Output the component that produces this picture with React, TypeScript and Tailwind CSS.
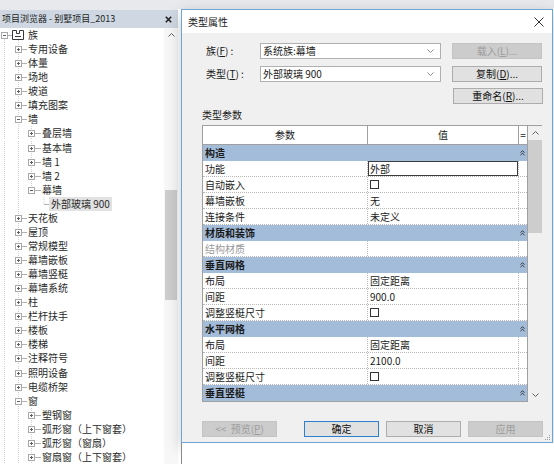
import React from 'react';

type Row = { l: number; t: string; e?: '+' | '-'; sel?: boolean };

const tree: Row[] = [
  { l: 0, t: '族', e: '-' },
  { l: 1, t: '专用设备', e: '+' },
  { l: 1, t: '体量', e: '+' },
  { l: 1, t: '场地', e: '+' },
  { l: 1, t: '坡道', e: '+' },
  { l: 1, t: '填充图案', e: '+' },
  { l: 1, t: '墙', e: '-' },
  { l: 2, t: '叠层墙', e: '+' },
  { l: 2, t: '基本墙', e: '+' },
  { l: 2, t: '墙 1', e: '+' },
  { l: 2, t: '墙 2', e: '+' },
  { l: 2, t: '幕墙', e: '-' },
  { l: 3, t: '外部玻璃 900', sel: true },
  { l: 1, t: '天花板', e: '+' },
  { l: 1, t: '屋顶', e: '+' },
  { l: 1, t: '常规模型', e: '+' },
  { l: 1, t: '幕墙嵌板', e: '+' },
  { l: 1, t: '幕墙竖梃', e: '+' },
  { l: 1, t: '幕墙系统', e: '+' },
  { l: 1, t: '柱', e: '+' },
  { l: 1, t: '栏杆扶手', e: '+' },
  { l: 1, t: '楼板', e: '+' },
  { l: 1, t: '楼梯', e: '+' },
  { l: 1, t: '注释符号', e: '+' },
  { l: 1, t: '照明设备', e: '+' },
  { l: 1, t: '电缆桥架', e: '+' },
  { l: 1, t: '窗', e: '-' },
  { l: 2, t: '塑钢窗', e: '+' },
  { l: 2, t: '弧形窗（上下窗套）', e: '+' },
  { l: 2, t: '弧形窗（窗扇）', e: '+' },
  { l: 2, t: '窗扇窗（上下窗套）', e: '+' },
];

const CX = [4.5, 18.5, 31.5, 44];
const TS = [28, 28, 42, 49];

function TreeRow({ r, i }: { r: Row; i: number }) {
  const v: [number, number, number][] = [];
  v.push([4.5, i === 0 ? 10.5 : 0, 14]);
  v.push([18.5, i === 0 ? 12 : 0, 14]);
  if ((i >= 7 && i <= 10) || i >= 27) v.push([31.5, 0, 14]);
  if (i === 11) v.push([31.5, 0, 7]);
  if (i === 12) v.push([44, 0, 7]);
  const cx = CX[r.l];
  const w = TS[r.l];
  const hEnd = r.l === 0 ? 12 : r.l === 3 ? 49 : w - 1;
  return (
    <div className="flex items-center h-[14.07px] shrink-0">
      <svg width={w} height="14" viewBox={`0 0 ${w} 14`} className="shrink-0">
        {v.map(([x, y1, y2], k) => (
          <line key={k} x1={x} x2={x} y1={y1} y2={y2} stroke="#cfcfcf" strokeDasharray="1 1" />
        ))}
        <line x1={cx} x2={hEnd} y1={7.5} y2={7.5} stroke="#b0b0b0" />
        {r.e && (
          <g>
            <rect x={cx - 3} y={4.5} width={6} height={6} fill="white" stroke="#a8a8a8" />
            <line x1={cx - 1.5} x2={cx + 1.5} y1={7.5} y2={7.5} stroke="#606060" />
            {r.e === '+' && <line x1={cx} x2={cx} y1={6} y2={9} stroke="#606060" />}
          </g>
        )}
        {r.l === 0 && (
          <g fill="none" stroke="#3a3a3a" strokeWidth="1">
            <path d="M12.5 2.5 H16.5 V5.5 H19.5 V2.5 H23.5 V11.5 H12.5 Z" />
            <path d="M15 8.5 H21" />
          </g>
        )}
      </svg>
      <span
        className={`whitespace-nowrap leading-[14px] text-[10px] text-[#2a2a2a] ${r.sel ? 'bg-[#e2e2e2] px-[2px]' : ''}`}
      >
        {r.t}
      </span>
    </div>
  );
}

function ChevUp({ c = '#606060' }: { c?: string }) {
  return (
    <svg width="7" height="4" viewBox="0 0 7 4">
      <path d="M0.5 3.5 L3.5 0.5 L6.5 3.5" stroke={c} fill="none" />
    </svg>
  );
}
function ChevDown({ c = '#606060' }: { c?: string }) {
  return (
    <svg width="7" height="4" viewBox="0 0 7 4">
      <path d="M0.5 0.5 L3.5 3.5 L6.5 0.5" stroke={c} fill="none" />
    </svg>
  );
}
function DblUp() {
  return (
    <svg width="5" height="6" viewBox="0 0 5 6">
      <path d="M0.5 2.5 L2.5 0.8 L4.5 2.5 M0.5 5 L2.5 3.3 L4.5 5" stroke="#2a2a2a" fill="none" strokeWidth="0.9" />
    </svg>
  );
}

function LeftPanel() {
  return (
    <div className="w-[181px] shrink-0 flex flex-col bg-white pr-[3px]">
      <div className="h-[1px] bg-[#e7e9ec]" />
      <div className="h-[18px] bg-[#cfd8e2] flex items-center pl-[2px] pr-[4px]">
        <span className="flex-1 text-[9px] leading-[18px] whitespace-nowrap text-[#1e1e1e]">
          项目浏览器 - 别墅项目_2013
        </span>
        <svg width="7" height="7" viewBox="0 0 7 7" className="mr-[2px]">
          <path d="M0.8 0.8 L6.2 6.2 M6.2 0.8 L0.8 6.2" stroke="#222" strokeWidth="1.6" />
        </svg>
      </div>
      <div className="flex flex-1 min-h-0">
        <div className="flex-1 flex flex-col overflow-hidden">
          {tree.map((r, i) => (
            <TreeRow key={i} r={r} i={i} />
          ))}
        </div>
        <div className="w-[14px] flex flex-col bg-[#f7f7f7]">
          <div className="h-[14px] flex items-center justify-center">
            <ChevUp />
          </div>
          <div className="h-[148px]" />
          <div className="h-[110px] bg-[#cdcdcd] mx-[1px]" />
          <div className="flex-1" />
        </div>
      </div>
    </div>
  );
}

function Select({ children }: { children: React.ReactNode }) {
  return (
    <div className="w-[181px] h-[16px] bg-white border border-[#b0b0b0] flex items-center pl-[2px] pr-[6px] shrink-0">
      <span className="flex-1 leading-[14px] whitespace-nowrap">{children}</span>
      <ChevDown c="#8a8a8a" />
    </div>
  );
}

function Btn({ children, w, kind }: { children: React.ReactNode; w: string; kind?: 'disabled' | 'primary' }) {
  const cls =
    kind === 'disabled'
      ? 'bg-[#cccccc] border-[#c4c4c4] text-[#9c9c9c]'
      : kind === 'primary'
      ? 'bg-[#e1e1e1] border-[#2f7fd1] text-[#111]'
      : 'bg-[#e1e1e1] border-[#adadad] text-[#111]';
  return (
    <div className={`h-[16px] border flex items-center justify-center leading-[14px] whitespace-nowrap shrink-0 ${w} ${cls}`}>
      {children}
    </div>
  );
}

type TRow =
  | { g: string }
  | { p: string; v?: string; cb?: boolean; dim?: boolean; active?: boolean };

const rows: TRow[] = [
  { g: '构造' },
  { p: '功能', v: '外部', active: true },
  { p: '自动嵌入', cb: true },
  { p: '幕墙嵌板', v: '无' },
  { p: '连接条件', v: '未定义' },
  { g: '材质和装饰' },
  { p: '结构材质', v: '', dim: true },
  { g: '垂直网格' },
  { p: '布局', v: '固定距离' },
  { p: '间距', v: '900.0' },
  { p: '调整竖梃尺寸', cb: true },
  { g: '水平网格' },
  { p: '布局', v: '固定距离' },
  { p: '间距', v: '2100.0' },
  { p: '调整竖梃尺寸', cb: true },
  { g: '垂直竖梃' },
];

function Checkbox() {
  return <div className="w-[9px] h-[9px] border border-[#333] bg-white" />;
}

function Table() {
  return (
    <div className="flex h-[277px] w-[340px] border-t border-[#a0a0a0] shrink-0">
      <div className="w-[326px] border-l border-r border-b border-[#a0a0a0] bg-white flex flex-col overflow-hidden">
        <div className="h-[19px] shrink-0 flex border-b border-[#a0a0a0]">
          <div className="w-[165px] border-r border-[#a0a0a0] flex items-center justify-center leading-[18px]">参数</div>
          <div className="w-[151px] border-r border-[#a0a0a0] flex items-center justify-center leading-[18px]">值</div>
          <div className="flex-1 flex items-center justify-center leading-[18px]">=</div>
        </div>
        {rows.map((r, i) =>
          'g' in r ? (
            <div key={i} className="h-[16px] shrink-0 flex items-center bg-[#a3bcd9]">
              <span className="flex-1 pl-[2px] font-bold leading-[16px] text-[#1a1a1a]">{r.g}</span>
              <div className="w-[8px] flex justify-center mr-[1px]">
                <DblUp />
              </div>
            </div>
          ) : (
            <div key={i} className="h-[16px] shrink-0 flex border-b border-dotted border-[#b8b8b8]">
              <div
                className={`w-[165px] border-r border-dotted border-[#b8b8b8] pl-[2px] leading-[15px] ${
                  r.dim ? 'text-[#9a9a9a]' : ''
                }`}
              >
                {r.p}
              </div>
              <div
                className={`w-[151px] border-r border-dotted border-[#b8b8b8] pl-[2px] leading-[15px] flex items-center ${
                  r.active ? 'shadow-[inset_0_0_0_1px_#3c3c3c]' : ''
                }`}
              >
                {r.cb ? <Checkbox /> : r.v}
              </div>
              <div className="flex-1" />
            </div>
          )
        )}
      </div>
      <div className="w-[14px] flex flex-col bg-[#f0f0f0]">
        <div className="h-[14px] flex items-center justify-center shrink-0">
          <ChevUp />
        </div>
        <div className="h-[93px] bg-[#cdcdcd] shrink-0" />
        <div className="flex-1" />
        <div className="h-[14px] flex items-center justify-center shrink-0">
          <ChevDown />
        </div>
      </div>
    </div>
  );
}

function Dialog() {
  return (
    <div className="w-[372px] h-[434px] border border-[#6fa4d6] flex flex-col shadow-[0_5px_14px_rgba(0,0,0,0.22)] shrink-0">
      <div className="h-[23px] bg-white flex items-center pl-[6px] pr-[8px] shrink-0">
        <span className="flex-1 leading-[23px]">类型属性</span>
        <svg width="10" height="10" viewBox="0 0 10 10">
          <path d="M0.5 0.5 L9.5 9.5 M9.5 0.5 L0.5 9.5" stroke="#333" strokeWidth="1" />
        </svg>
      </div>
      <div className="flex-1 bg-[#f0f0f0] flex flex-col pt-[10px] pl-[20px] pr-[9px] pb-[5px] relative">
        <div className="flex items-center h-[16px]">
          <div className="w-[58px] pl-[4px] leading-[16px] whitespace-nowrap">
            族(<span className="underline">F</span>) :
          </div>
          <Select>系统族:幕墙</Select>
          <div className="ml-[11px]">
            <Btn w="w-[90px]" kind="disabled">
              载入(<span className="underline">L</span>)...
            </Btn>
          </div>
        </div>
        <div className="flex items-center h-[16px] mt-[7px]">
          <div className="w-[58px] pl-[4px] leading-[16px] whitespace-nowrap">
            类型(<span className="underline">T</span>) :
          </div>
          <Select>外部玻璃 900</Select>
          <div className="ml-[11px]">
            <Btn w="w-[90px]">
              复制(<span className="underline">D</span>)...
            </Btn>
          </div>
        </div>
        <div className="flex justify-end h-[16px] mt-[6px]">
          <Btn w="w-[90px]">
            重命名(<span className="underline">R</span>)...
          </Btn>
        </div>
        <div className="mt-[5px] h-[12px] leading-[12px] text-[#222]">类型参数</div>
        <div className="mt-[4px]">
          <Table />
        </div>
        <div className="mt-[19px] flex h-[16px]">
          <Btn w="w-[75px]" kind="disabled">
            &lt;&lt;&nbsp; 预览(<span className="underline">P</span>)
          </Btn>
          <div className="ml-auto flex gap-[7px]">
            <Btn w="w-[75px]" kind="primary">确定</Btn>
            <Btn w="w-[75px]">取消</Btn>
            <Btn w="w-[75px]" kind="disabled">应用</Btn>
          </div>
        </div>
        <svg width="7" height="7" viewBox="0 0 7 7" className="absolute right-[1px] bottom-[1px]">
          <g fill="#a0a0a0">
            <rect x="5" y="1" width="1" height="1" />
            <rect x="3" y="3" width="1" height="1" />
            <rect x="5" y="3" width="1" height="1" />
            <rect x="1" y="5" width="1" height="1" />
            <rect x="3" y="5" width="1" height="1" />
            <rect x="5" y="5" width="1" height="1" />
          </g>
        </svg>
      </div>
    </div>
  );
}

export default function App() {
  return (
    <div className="w-[554px] h-[464px] overflow-hidden bg-white flex flex-col font-['Noto_Sans_CJK_SC','Noto_Sans',sans-serif] text-[10px] text-[#1a1a1a]">
      <div className="h-[9px] bg-[#e7e9ec] shrink-0" />
      <div className="flex flex-1 min-h-0">
        <LeftPanel />
        <div className="flex flex-col w-[373px]">
          <Dialog />
          <div className="flex-1 bg-white border-l border-[#8a8a8a]" />
        </div>
      </div>
    </div>
  );
}
